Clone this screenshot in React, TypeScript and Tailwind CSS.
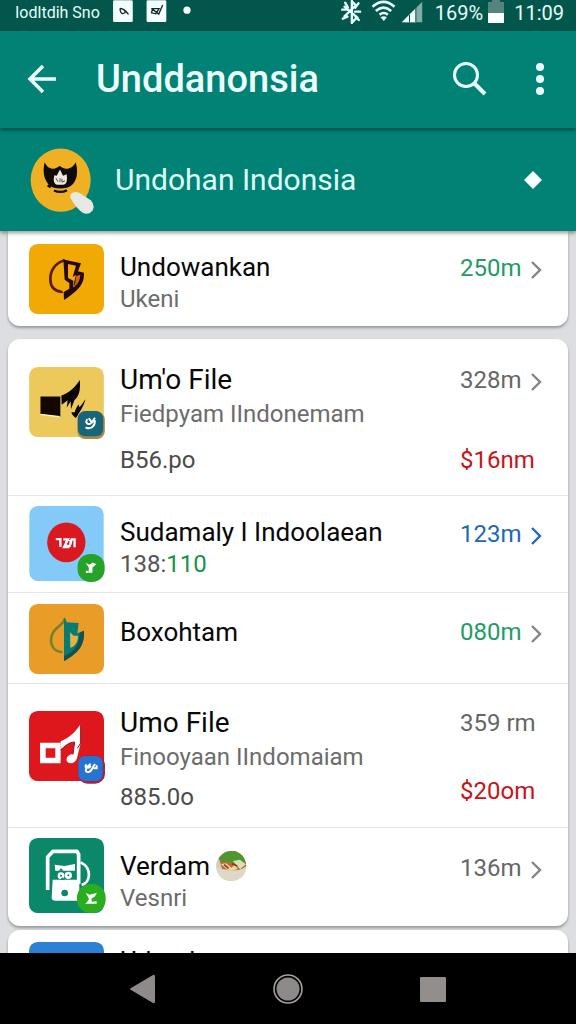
import type { ReactNode } from "react";

function TileFrame({ box, tall, children }: { box: string; tall?: boolean; children: ReactNode }) {
  return (
    <svg viewBox={box} aria-hidden="true" className={tall ? "h-[75px] w-[75px] shrink-0 overflow-visible" : "h-[70px] w-[75px] shrink-0 overflow-visible"}>
      {children}
    </svg>
  );
}

function BoltTile() {
  return (
    <TileFrame box="87 40 225 210">
      <rect x="87" y="40" width="225" height="210" rx="26" fill="#f1a905" />
      <path d="M190 90C165 98 151 120 151 145C151 168 163 181 185 184" fill="none" stroke="#5c1a08" strokeWidth="8" strokeLinecap="round" />
      <path d="M190 84L197 88L243 98L234 122L252 126C253 158 240 176 192 208L191 184L208 174V157L194 147Z" fill="#25090a" />
      <path d="M204 100L228 105L218 139L228 133L222 156L224 168L220 170V150L204 142Z" fill="#f1a905" />
      <path d="M229 136L241 132C240 149 233 161 224 166Z" fill="#c96a06" />
    </TileFrame>
  );
}

function HandTile() {
  return (
    <TileFrame box="87 81 225 211">
      <rect x="87" y="81" width="225" height="211" rx="26" fill="#edc95c" />
      <path d="M121 170H181V231L121 223Z" fill="#120800" />
      <path d="M121 224L179 231" stroke="#fff2bd" strokeWidth="4" />
      <path d="M184 167C206 158 222 147 240 120C242 151 237 170 224 180L213 208L212 184L200 204L203 181L185 195Z" fill="#080400" />
      <path d="M257 178C252 198 240 215 228 235C222 231 217 226 214 218C219 216 222 219 225 217C226 206 232 200 236 193L238 202C246 196 250 186 257 178Z" fill="#080400" />
      <rect x="232" y="216" width="83" height="82" rx="24" fill="#a98746" />
      <rect x="234" y="214" width="76" height="76" rx="22" fill="#176579" />
      <path d="M261 240C256 248 262 255 271 252C279 249 279 242 284 236M268 237L273 244M285 244C285 260 273 269 259 264" fill="none" stroke="#fff" strokeWidth="6" strokeLinecap="round" />
    </TileFrame>
  );
}

function RedDotTile() {
  return (
    <TileFrame box="87 33 225 227" tall>
      <rect x="87" y="33" width="225" height="227" rx="26" fill="#83caf8" />
      <ellipse cx="199" cy="143" rx="58" ry="60" fill="#d91820" />
      <path d="M167 133H181V157M190 134H204L192 157H208M208 157L215 134H224V158" fill="none" stroke="#fff" strokeWidth="7" />
      <circle cx="205" cy="145" r="8" fill="none" stroke="#fff" strokeWidth="4" />
      <rect x="233" y="178" width="82" height="85" rx="38" fill="#25a329" />
      <path d="M257 205L269 211L279 204L290 209L278 219V235H267V219ZM258 229H266V236H258Z" fill="#fff" />
    </TileFrame>
  );
}

function ShieldTile() {
  return (
    <TileFrame box="87 325 225 210">
      <rect x="87" y="325" width="225" height="210" rx="26" fill="#e99d28" />
      <path d="M194 370C189 392 153 397 153 433C153 453 165 467 184 469" fill="none" stroke="#77822b" strokeWidth="8" strokeLinecap="round" />
      <path d="M192 366L201 380L236 382L232 413L252 405C253 449 239 469 192 496Z" fill="#087c71" />
      <path d="M210 410L221 420L234 420C234 438 228 449 211 457Z" fill="#e4b246" />
      <path d="M252 405C253 449 239 469 192 496V481C226 466 237 448 239 412Z" fill="#164f4b" />
    </TileFrame>
  );
}

function MusicTile() {
  return (
    <TileFrame box="87 78 225 210">
      <rect x="87" y="78" width="225" height="210" rx="26" fill="#de171d" />
      <path d="M120 173H182V235H120ZM137 190V218H166V190Z" fill="#fff" fillRule="evenodd" />
      <path d="M182 169C211 156 224 143 242 117V174L231 220C225 237 207 239 200 228C198 215 208 208 219 208L224 171C207 171 194 184 182 193Z" fill="#fff" />
      <path d="M242 118V174L232 190M219 208L224 171C207 171 194 184 182 195" fill="none" stroke="#8c1828" strokeWidth="3" />
      <rect x="233" y="211" width="82" height="85" rx="30" fill="#a52341" />
      <rect x="235" y="213" width="73" height="75" rx="20" fill="#2773d4" />
      <path d="M258 240C252 250 266 251 271 244M270 238C255 249 253 263 266 261C276 259 276 248 284 239M283 250H290V243" fill="none" stroke="#fff" strokeWidth="6" strokeLinecap="round" />
    </TileFrame>
  );
}

function PumpTile() {
  return (
    <TileFrame box="87 39 225 225" tall>
      <rect x="87" y="39" width="225" height="225" rx="26" fill="#0b8869" />
      <path d="M143 195V96L159 79H231L236 88V176" fill="none" stroke="#fff" strokeWidth="11" strokeLinejoin="round" />
      <path d="M242 112C277 129 272 172 245 180" fill="none" stroke="#fff" strokeWidth="8" />
      <path d="M164 119L193 123L225 117V137H166Z" fill="#fff" />
      <path d="M158 164H238V227H164Q155 227 155 217Z" fill="#fff" />
      <circle cx="183" cy="152" r="10" fill="#fff" />
      <circle cx="205" cy="151" r="11" fill="#fff" />
      <path d="M176 137L183 130L191 137ZM180 164L187 157L193 164Z" fill="#0b8869" />
      <circle cx="183" cy="152" r="3" fill="#0b8869" />
      <circle cx="205" cy="151" r="3" fill="#0b8869" />
      <circle cx="194" cy="204" r="10" fill="#0b8869" />
      <rect x="231" y="177" width="86" height="87" rx="40" fill="#2aae20" />
      <path d="M257 204L269 209L281 206L291 203L284 215L275 220V230L290 229V236H256L266 225V219Z" fill="#fff" />
    </TileFrame>
  );
}

function BlueTile() {
  return (
    <TileFrame box="87 350 225 210">
      <rect x="87" y="350" width="225" height="210" rx="26" fill="#2d80d3" />
    </TileFrame>
  );
}

function Salad() {
  return (
    <svg viewBox="647 74 92 90" role="img" aria-label="Salad bowl" className="h-[30px] w-[31px] shrink-0">
      <circle cx="692" cy="119" r="45" fill="#d3ceb5" />
      <path d="M655 95C665 79 681 74 697 74C722 76 737 97 737 119L719 134L665 128Z" fill="#bc6938" />
      <path d="M655 97L674 77L704 74L727 89L736 111L713 103L705 113L680 105L664 107Z" fill="#4d982c" />
      <path d="M697 104L718 100L736 114L719 129Z" fill="#d4e2b7" />
      <path d="M661 113L677 111L693 124L703 114L712 128L700 132L680 130Z" fill="#efd19b" />
      <path d="M671 115L684 126M695 112L710 119" stroke="#873a18" strokeWidth="5" />
      <path d="M648 121Q692 145 737 123Q733 163 692 164Q652 162 648 121Z" fill="#ddd9c6" />
    </svg>
  );
}

function Chevron({ className }: { className: string }) {
  return (
    <svg viewBox="0 0 12 20" aria-hidden="true" className={`mt-1 h-5 w-3 shrink-0 ${className}`}>
      <path d="M2 2L10 10L2 18" fill="none" stroke="currentColor" strokeWidth="2.4" />
    </svg>
  );
}

interface RowProps {
  icon: ReactNode;
  title: string;
  titleClass?: string;
  extra?: ReactNode;
  subtitle?: ReactNode;
  note?: string;
  noteClass?: string;
  size?: string;
  sizeClass?: string;
  chevron?: string;
  price?: string;
  priceClass?: string;
  rowClass: string;
  textClass: string;
  valueClass?: string;
}

function Row(p: RowProps) {
  return (
    <li className={`flex items-start pl-[21px] ${p.rowClass}`}>
      {p.icon}
      <div className={`ml-4 min-w-0 flex-1 whitespace-nowrap text-2xl leading-8 text-[#6c6c6c] ${p.textClass}`}>
        <h2 className={`flex items-center gap-1.5 leading-8 text-[#080808] ${p.titleClass ?? "text-[26px]"}`}>
          {p.title}
          {p.extra}
        </h2>
        {p.subtitle && <p>{p.subtitle}</p>}
        {p.note && <p className={`text-[#4c4c4c] ${p.noteClass ?? ""}`}>{p.note}</p>}
      </div>
      {p.size && (
        <div className={`w-[108px] shrink-0 whitespace-nowrap text-2xl leading-8 ${p.valueClass ?? ""}`}>
          <p className={`flex items-center ${p.sizeClass ?? "text-[#666666]"}`}>
            <span className={p.chevron ? "w-[70px]" : ""}>{p.size}</span>
            {p.chevron && <Chevron className={p.chevron} />}
          </p>
          {p.price && <p className={`text-[#c81418] ${p.priceClass ?? ""}`}>{p.price}</p>}
        </div>
      )}
    </li>
  );
}

function Card({ className, children }: { className?: string; children: ReactNode }) {
  return (
    <ul className={`shrink-0 divide-y divide-[#e4e5e6] bg-white shadow-[0_2px_3px_rgba(0,0,0,0.32)] ${className ?? ""}`}>
      {children}
    </ul>
  );
}

function StatusBar() {
  return (
    <div className="flex h-[31px] shrink-0 items-start bg-[#03564b] pl-[15px] pr-3 text-[#e6fffa]">
      <span className="w-[97px] whitespace-nowrap text-base leading-[26px]">Iodltdih Sno</span>
      <svg viewBox="336 0 244 70" aria-hidden="true" className="h-[23px] w-[81px] shrink-0">
        <rect x="338" y="1" width="60" height="66" rx="4" fill="#f3ffff" />
        <path d="M359 26Q371 25 385 44M359 26Q360 43 370 41T370 28" fill="none" stroke="#182725" strokeWidth="4" />
        <rect x="440" y="1" width="60" height="66" rx="4" fill="#f3ffff" />
        <path d="M454 26H478L468 42L455 39L458 28L477 43L489 15" fill="none" stroke="#182725" strokeWidth="4" />
        <circle cx="563" cy="31" r="11" fill="#f3ffff" />
      </svg>
      <div className="ml-auto flex items-start">
        <svg viewBox="165 0 245 72" aria-hidden="true" className="mr-3 h-6 w-[82px] shrink-0">
          <path d="M197 3V69M197 4L209 16L175 49M175 20L213 52L197 68M177 8L185 22M168 29H187M207 35H222M217 10L207 23M170 56L184 50M208 50L218 60" fill="none" stroke="#e8ffff" strokeWidth="7" strokeLinecap="round" />
          <path d="M259 20Q292 -9 325 20M269 33Q292 13 315 33M280 44Q293 34 305 44" fill="none" stroke="#e8ffff" strokeWidth="8" />
          <path d="M283 52Q293 45 302 52L293 63Z" fill="#e8ffff" />
          <path d="M347 67L408 5V67Z" fill="#80ada8" />
          <path d="M347 67L389 25V67Z" fill="#f1ffff" />
          <path d="M370 44V67M389 10V67" stroke="#03564b" strokeWidth="3" />
        </svg>
        <span className="mr-[5px] text-xl leading-[26px]">169%</span>
        <svg viewBox="0 0 16 23" aria-hidden="true" className="mr-2.5 h-[23px] w-4 shrink-0">
          <path d="M4 0H12V2H16V13H0V2H4Z" fill="#53847e" />
          <path d="M0 13H16V23H0Z" fill="#fff" />
        </svg>
        <span className="text-xl leading-[26px]">11:09</span>
      </div>
    </div>
  );
}

function AppBar() {
  return (
    <header className="relative z-10 flex h-[97px] shrink-0 items-center bg-[#018275] pb-0.5 pl-[26px] pr-6 text-[#ecfffc] shadow-[0_2px_4px_rgba(0,0,0,0.45)]">
      <button type="button" aria-label="Back" className="shrink-0">
        <svg viewBox="0 0 32 32" className="size-8">
          <path d="M30 16H4M17 3L4 16L17 29" fill="none" stroke="currentColor" strokeWidth="3.5" />
        </svg>
      </button>
      <h1 className="ml-[38px] flex-1 text-[38px] leading-[48px] font-medium">Unddanonsia</h1>
      <button type="button" aria-label="Search" className="shrink-0">
        <svg viewBox="0 0 36 36" className="h-9 w-9">
          <circle cx="14" cy="14" r="11.5" fill="none" stroke="currentColor" strokeWidth="3" />
          <path d="M22 22L33 33" stroke="currentColor" strokeWidth="4" />
        </svg>
      </button>
      <button type="button" aria-label="More options" className="ml-10 shrink-0">
        <svg viewBox="0 0 24 34" className="h-[34px] w-6">
          <circle cx="12" cy="5" r="4" fill="currentColor" />
          <circle cx="12" cy="17" r="4" fill="currentColor" />
          <circle cx="12" cy="29" r="4" fill="currentColor" />
        </svg>
      </button>
    </header>
  );
}

function AccountBar() {
  return (
    <section className="relative z-[5] flex h-[103px] shrink-0 items-center bg-[#018275] pl-[30px] pr-[34px] text-[#dcfff8] shadow-[0_2px_4px_rgba(0,0,0,0.4)]">
      <svg viewBox="91 68 192 200" aria-hidden="true" className="mt-1 h-[67px] w-16 shrink-0">
        <ellipse cx="183" cy="164" rx="90" ry="95" fill="#efb024" />
        <path d="M135 110C144 132 166 135 180 121C194 135 218 132 228 110C240 150 226 178 204 186Q182 192 160 186C137 175 126 145 135 110Z" fill="#120a08" />
        <path d="M144 179L153 185M163 195Q183 204 202 194" fill="none" stroke="#120a08" strokeWidth="7" />
        <path d="M181 132L190 151L201 146Q206 174 191 178H172Q158 172 164 149L171 151Z" fill="#eee9df" />
        <path d="M169 158L175 169M181 158V170M187 160V170L196 166" fill="none" stroke="#58504b" strokeWidth="3" />
        <path d="M214 205Q226 193 246 206L273 224Q287 238 279 254Q267 270 249 262Q233 251 217 226Q208 211 214 205Z" fill="#e8e9e4" />
      </svg>
      <h2 className="ml-[21px] flex-1 whitespace-nowrap text-[30px] leading-10">Undohan Indonsia</h2>
      <svg viewBox="0 0 18 18" aria-hidden="true" className="size-[18px] shrink-0">
        <path d="M9 0L18 9L9 18L0 9Z" fill="#f5ffff" />
      </svg>
    </section>
  );
}

function NavBar() {
  return (
    <nav className="flex h-[71px] shrink-0 items-center justify-center gap-[115px] bg-black">
      <button type="button" aria-label="Back">
        <svg viewBox="0 0 30 30" className="size-[30px]">
          <path d="M3 14L25 1Q27 0 27 3V27Q27 30 25 29L3 16Q1 15 3 14Z" fill="#8e8a89" />
        </svg>
      </button>
      <button type="button" aria-label="Home">
        <svg viewBox="0 0 30 30" className="size-[30px]">
          <circle cx="15" cy="15" r="14" fill="none" stroke="#a4a1a0" strokeWidth="1.6" />
          <circle cx="15" cy="15" r="11.5" fill="#8e8a89" />
        </svg>
      </button>
      <button type="button" aria-label="Recent apps">
        <svg viewBox="0 0 30 30" className="size-[30px]">
          <rect x="2" y="3" width="26" height="25" rx="1" fill="#938d8b" />
        </svg>
      </button>
    </nav>
  );
}

export default function App() {
  return (
    <div className="flex h-screen flex-col overflow-hidden bg-[#dcdee2] font-[Roboto,sans-serif]">
      <StatusBar />
      <AppBar />
      <AccountBar />
      <main className="flex min-h-0 flex-1 flex-col overflow-hidden px-2">
        <Card className="rounded-b-xl">
          <Row icon={<BoltTile />} title="Undowankan" subtitle="Ukeni" size="250m" sizeClass="text-[#229b68]" chevron="text-[#858585]" rowClass="h-[95px] pt-[13px]" textClass="pt-[7px]" valueClass="pt-2" />
        </Card>
        <Card className="mt-[13px] rounded-xl">
          <Row icon={<HandTile />} title="Um'o File" titleClass="mb-0.5 text-[28px]" subtitle="Fiedpyam IIndonemam" note="B56.po" noteClass="mt-[14px]" size="328m" chevron="text-[#858585]" price="$16nm" priceClass="mt-12" rowClass="h-[157px] pt-[25px] [&>svg]:mt-[3px]" textClass="" />
          <Row
            icon={<RedDotTile />}
            title="Sudamaly I Indoolaean"
            subtitle={<><span className="text-[#555555]">138:</span><span className="text-[#169447]">110</span></>}
            size="123m"
            sizeClass="text-[#2068b8]"
            chevron="text-[#2068b8]"
            rowClass="h-[97px] pt-[10px]"
            textClass="pt-[10px]"
            valueClass="pt-3"
          />
          <Row icon={<ShieldTile />} title="Boxohtam" size="080m" sizeClass="text-[#229b68]" chevron="text-[#858585]" rowClass="h-[91px] pt-[11px]" textClass="pt-3" valueClass="pt-3" />
          <Row icon={<MusicTile />} title="Umo File" titleClass="mb-0.5 text-[28px]" subtitle="Finooyaan IIndomaiam" note="885.0o" noteClass="mt-2" size="359 rm" price="$20om" priceClass="mt-9" rowClass="h-36 pt-[23px] [&>svg]:mt-1" textClass="" />
          <Row icon={<PumpTile />} title="Verdam" extra={<Salad />} subtitle="Vesnri" size="136m" chevron="text-[#858585]" rowClass="h-[98px] pt-[10px]" textClass="pt-3" valueClass="pt-[14px]" />
        </Card>
        <Card className="mt-1 rounded-t-xl">
          <Row icon={<BlueTile />} title="Udomhan" rowClass="h-[95px] pt-[3px] [&>svg]:mt-[9px]" textClass="pt-3" />
        </Card>
      </main>
      <NavBar />
    </div>
  );
}
